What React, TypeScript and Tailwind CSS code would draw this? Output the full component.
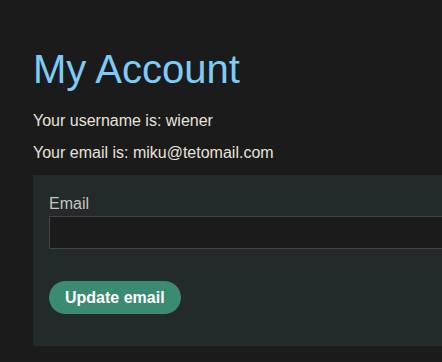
const App = () => {
    return (
        <div className="min-h-[362px] w-[442px] overflow-hidden bg-[#1b1b1b] pl-[33px] pt-[45px] font-['Liberation_Sans',Arial,sans-serif] text-[#e8e2da]">
            <h1 className="text-[40px] leading-[48px] font-normal text-[#7dcbf7]">My Account</h1>
            <p className="mt-4 text-base leading-6">Your username is: wiener</p>
            <p className="mt-2 text-base leading-6">Your email is: miku@tetomail.com</p>
            <form className="mt-[10px] w-[520px] bg-[#222a2b] px-4 pt-[17px] pb-8" onSubmit={(e) => e.preventDefault()}>
                <label className="block text-base leading-6 text-[#cbc4ba]">Email</label>
                <input
                    type="email"
                    name="email"
                    className="block h-[33px] w-full border border-[#424545] bg-[#1b1b1b] px-2 text-[#e8e2da] outline-none"
                />
                <button
                    type="submit"
                    className="mt-8 h-[33px] rounded-full bg-[#3b8a72] px-4 text-base font-bold text-white"
                >
                    Update email
                </button>
            </form>
        </div>
    );
};

export default App;
